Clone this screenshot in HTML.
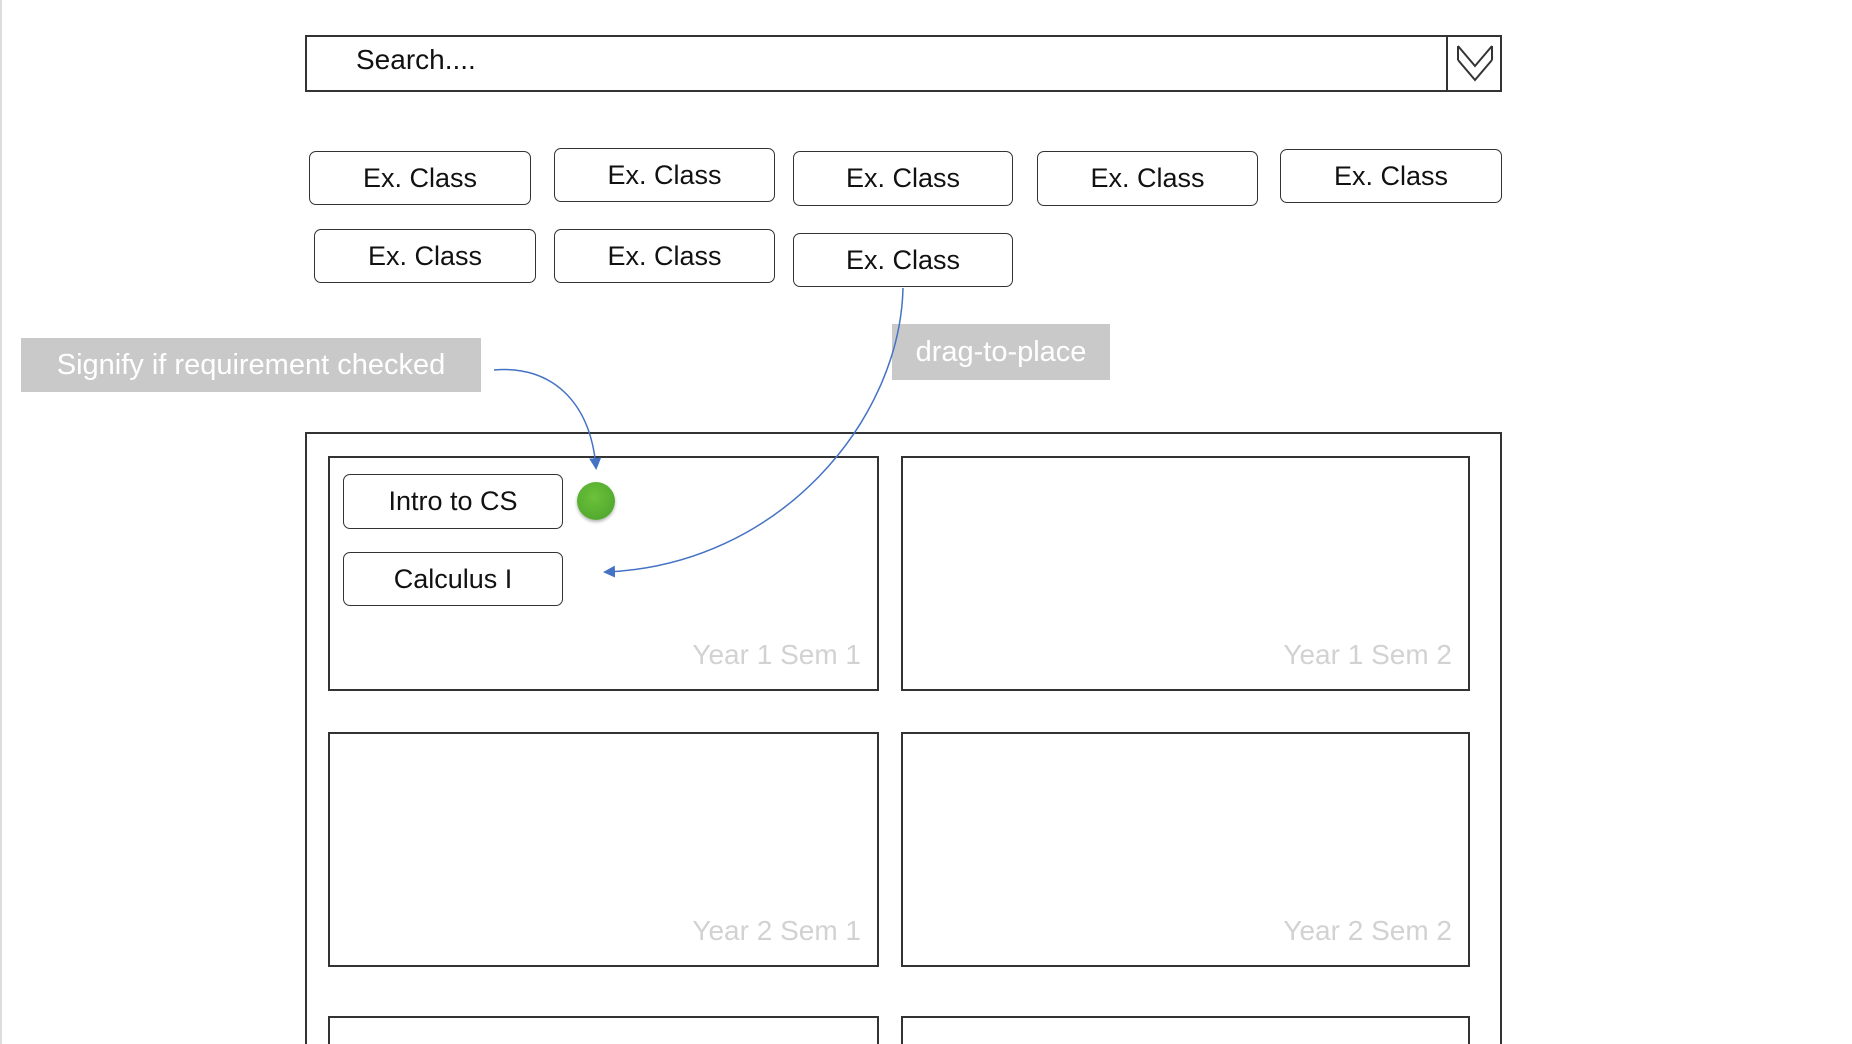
<!DOCTYPE html>
<html><head><meta charset="utf-8"><style>
html,body{margin:0;padding:0;background:#fff;width:1852px;height:1044px;overflow:hidden;position:relative;font-family:"Liberation Sans",sans-serif}
.a{position:absolute;box-sizing:border-box}
.chip{border:1.5px solid #333;border-radius:7px;display:flex;align-items:center;justify-content:center;font-size:27px;color:#111;background:#fff}
.box{border:2px solid #333;background:#fff}
.lbl{position:absolute;right:16px;bottom:18px;font-size:28px;color:#d2d2d2}
.tag{background:#c9c9c9;color:#fff;font-size:29px;display:flex;align-items:center;justify-content:center}
</style></head><body>
<div class="a" style="left:0;top:0;width:2px;height:1044px;background:#ddd"></div>
<div class="a" style="left:305px;top:35px;width:1197px;height:57px;border:2px solid #333"></div>
<div class="a" style="left:1446px;top:35px;width:2px;height:57px;background:#333"></div>
<svg class="a" style="left:1455px;top:42px" width="40" height="42"><path d="M3 4 L20 24 L37 4 M3 18 L20 38 L37 18 M3 4 V18 M37 4 V18" fill="none" stroke="#333" stroke-width="2"/></svg>
<div class="a" style="left:356px;top:44px;font-size:28px;color:#111">Search....</div>

<div class="a chip" style="left:309px;top:151px;width:222px;height:54px">Ex. Class</div>
<div class="a chip" style="left:554px;top:148px;width:221px;height:54px">Ex. Class</div>
<div class="a chip" style="left:793px;top:151px;width:220px;height:55px">Ex. Class</div>
<div class="a chip" style="left:1037px;top:151px;width:221px;height:55px">Ex. Class</div>
<div class="a chip" style="left:1280px;top:149px;width:222px;height:54px">Ex. Class</div>
<div class="a chip" style="left:314px;top:229px;width:222px;height:54px">Ex. Class</div>
<div class="a chip" style="left:554px;top:229px;width:221px;height:54px">Ex. Class</div>
<div class="a chip" style="left:793px;top:233px;width:220px;height:54px">Ex. Class</div>

<div class="a tag" style="left:21px;top:338px;width:460px;height:54px">Signify if requirement checked</div>
<div class="a tag" style="left:892px;top:324px;width:218px;height:56px">drag-to-place</div>

<div class="a" style="left:305px;top:432px;width:1197px;height:640px;border:2px solid #333"></div>
<div class="a box" style="left:328px;top:456px;width:551px;height:235px"><span class="lbl">Year 1 Sem 1</span></div>
<div class="a box" style="left:901px;top:456px;width:569px;height:235px"><span class="lbl">Year 1 Sem 2</span></div>
<div class="a box" style="left:328px;top:732px;width:551px;height:235px"><span class="lbl">Year 2 Sem 1</span></div>
<div class="a box" style="left:901px;top:732px;width:569px;height:235px"><span class="lbl">Year 2 Sem 2</span></div>
<div class="a box" style="left:328px;top:1016px;width:551px;height:60px"></div>
<div class="a box" style="left:901px;top:1016px;width:569px;height:60px"></div>

<div class="a chip" style="left:343px;top:474px;width:220px;height:55px">Intro to CS</div>
<div class="a chip" style="left:343px;top:552px;width:220px;height:54px">Calculus I</div>
<div class="a" style="left:577px;top:482px;width:38px;height:38px;border-radius:50%;background:radial-gradient(circle at 45% 40%,#6cc23a,#4aa02a);box-shadow:0 2px 3px rgba(0,0,0,.3)"></div>

<svg class="a" style="left:0;top:0" width="1852" height="1044">
<defs><marker id="m" markerWidth="8" markerHeight="8" refX="6" refY="4" orient="auto"><path d="M0 0 L8 4 L0 8z" fill="#4472c4"/></marker></defs>
<path d="M494 370 C550 365 590 400 596 467" fill="none" stroke="#4472c4" stroke-width="1.5" marker-end="url(#m)"/>
<path d="M903 288 C900 420 780 565 606 572" fill="none" stroke="#4472c4" stroke-width="1.5" marker-end="url(#m)"/>
</svg>
</body></html>
